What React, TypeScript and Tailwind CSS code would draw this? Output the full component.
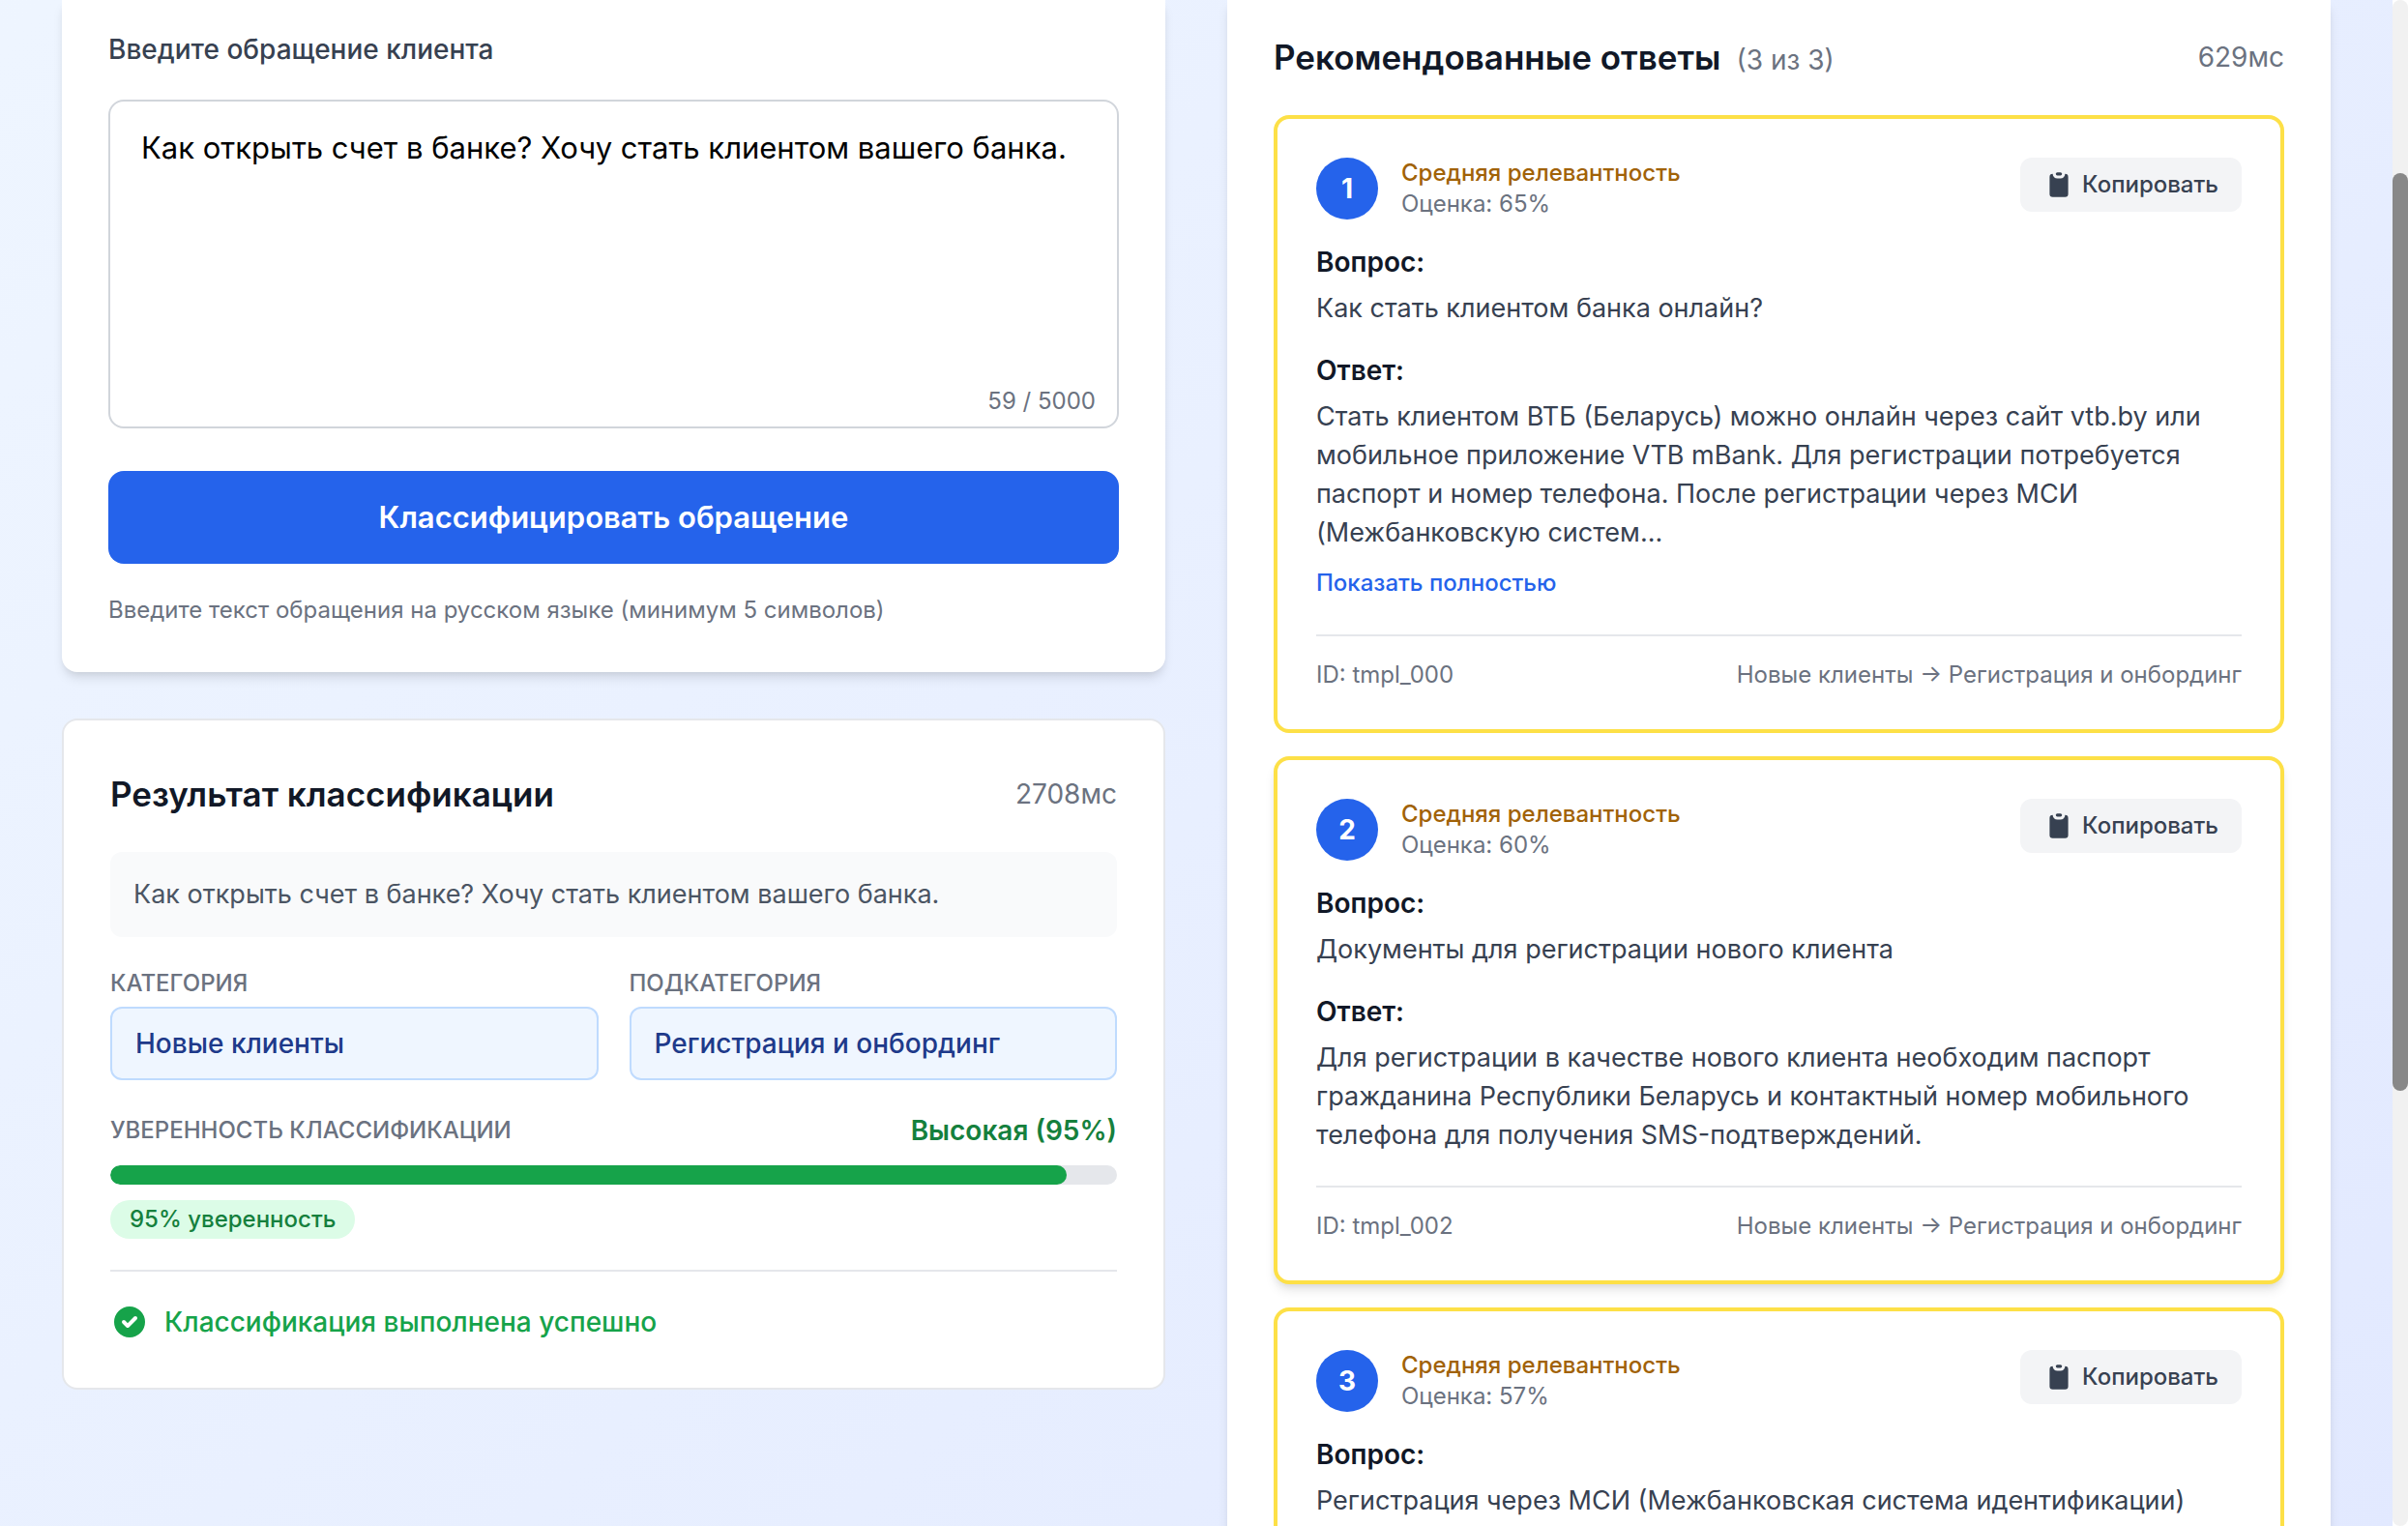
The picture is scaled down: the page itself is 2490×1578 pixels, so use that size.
import { useState } from "react";

const REQUEST = "Как открыть счет в банке? Хочу стать клиентом вашего банка.";
const MAX_LENGTH = 5000;
const CONFIDENCE = 95;

type Answer = {
  rank: number;
  score: number;
  question: string;
  answer?: string;
  truncated?: boolean;
  id?: string;
  raised?: boolean;
};

const ANSWERS: Answer[] = [
  {
    rank: 1,
    score: 65,
    question: "Как стать клиентом банка онлайн?",
    answer:
      "Стать клиентом ВТБ (Беларусь) можно онлайн через сайт vtb.by или мобильное приложение VTB mBank. Для регистрации потребуется паспорт и номер телефона. После регистрации через МСИ (Межбанковскую систем...",
    truncated: true,
    id: "tmpl_000",
  },
  {
    rank: 2,
    score: 60,
    question: "Документы для регистрации нового клиента",
    answer:
      "Для регистрации в качестве нового клиента необходим паспорт гражданина Республики Беларусь и контактный номер мобильного телефона для получения SMS-подтверждений.",
    id: "tmpl_002",
    raised: true,
  },
  {
    rank: 3,
    score: 57,
    question: "Регистрация через МСИ (Межбанковская система идентификации)",
  },
];

const SHADOW =
  "shadow-[0_8px_12px_-2px_rgb(0_0_0/0.1),0_4px_8px_-4px_rgb(0_0_0/0.1)]";

function ClipboardIcon() {
  return (
    <svg className="size-8" viewBox="0 0 20 20" fill="currentColor" aria-hidden="true">
      <path d="M8 3a1 1 0 011-1h2a1 1 0 110 2H9a1 1 0 01-1-1z" />
      <path d="M6 3a2 2 0 00-2 2v11a2 2 0 002 2h8a2 2 0 002-2V5a2 2 0 00-2-2 3 3 0 01-3 3H9a3 3 0 01-3-3z" />
    </svg>
  );
}

function CheckCircleIcon() {
  return (
    <svg className="size-10" viewBox="0 0 20 20" fill="currentColor" aria-hidden="true">
      <path
        fillRule="evenodd"
        clipRule="evenodd"
        d="M10 18a8 8 0 100-16 8 8 0 000 16zm3.707-9.293a1 1 0 00-1.414-1.414L9 10.586 7.707 9.293a1 1 0 00-1.414 1.414l2 2a1 1 0 001.414 0l4-4z"
      />
    </svg>
  );
}

function RequestForm() {
  const [text, setText] = useState(REQUEST);
  return (
    <form
      className={`flex flex-col rounded-b-2xl bg-white px-12 pt-[31px] pb-12 ${SHADOW}`}
      onSubmit={(e) => e.preventDefault()}
    >
      <label htmlFor="request" className="text-[28px] leading-10 font-medium text-[#374151]">
        Введите обращение клиента
      </label>
      <div className="relative mt-8 flex">
        <textarea
          id="request"
          value={text}
          maxLength={MAX_LENGTH}
          onChange={(e) => setText(e.target.value)}
          className="h-[340px] w-full resize-none rounded-2xl border-2 border-[#d1d5db] bg-white px-8 py-6 text-[31px] leading-12 text-black outline-none"
        />
        <span className="absolute right-6 bottom-3 text-[24px] leading-8 text-[#6b7280]">
          {text.length} / {MAX_LENGTH}
        </span>
      </div>
      <button
        type="submit"
        className="mt-11 rounded-2xl bg-[#2563eb] py-6 text-[31px] leading-12 font-semibold text-white"
      >
        Классифицировать обращение
      </button>
      <p className="mt-8 text-[24px] leading-8 text-[#6b7280]">
        Введите текст обращения на русском языке (минимум 5 символов)
      </p>
    </form>
  );
}

function Field({ label, value }: { label: string; value: string }) {
  return (
    <div>
      <dt className="text-[24px] leading-8 font-medium text-[#6b7280] uppercase">{label}</dt>
      <dd className="mt-2 rounded-xl border-2 border-[#bfdbfe] bg-[#eff6ff] px-6 py-4 text-[28px] leading-10 font-medium text-[#1e3a8a]">
        {value}
      </dd>
    </div>
  );
}

function ClassificationResult() {
  return (
    <section className="mt-12 rounded-2xl border-2 border-[#e5e7eb] bg-white p-12">
      <div className="flex items-center justify-between">
        <h2 className="text-[35px] leading-14 font-semibold text-[#111827]">
          Результат классификации
        </h2>
        <span className="text-[28px] leading-10 text-[#6b7280]">2708мс</span>
      </div>
      <p className="mt-8 rounded-xl bg-[#f9fafb] p-6 text-[27px] leading-10 text-[#4b5563]">
        {REQUEST}
      </p>
      <dl className="mt-8 grid grid-cols-2 gap-8">
        <Field label="Категория" value="Новые клиенты" />
        <Field label="Подкатегория" value="Регистрация и онбординг" />
      </dl>
      <div className="mt-8 flex items-center justify-between">
        <span id="confidence" className="text-[24px] leading-8 font-medium text-[#6b7280] uppercase">
          Уверенность классификации
        </span>
        <span className="text-[28px] leading-10 font-semibold text-[#15803d]">
          Высокая ({CONFIDENCE}%)
        </span>
      </div>
      <div
        role="progressbar"
        aria-labelledby="confidence"
        aria-valuenow={CONFIDENCE}
        className="mt-4 h-5 overflow-hidden rounded-full bg-[#e5e7eb]"
      >
        <div className="h-full rounded-full bg-[#16a34a]" style={{ width: `${CONFIDENCE}%` }} />
      </div>
      <div className="mt-4 flex">
        <span className="rounded-full bg-[#dcfce7] px-5 py-1 text-[24px] leading-8 font-medium text-[#15803d]">
          {CONFIDENCE}% уверенность
        </span>
      </div>
      <div className="mt-8 flex items-center gap-4 border-t-2 border-[#e5e7eb] pt-8 text-[#16a34a]">
        <CheckCircleIcon />
        <span className="text-[28px] leading-10 font-medium">Классификация выполнена успешно</span>
      </div>
    </section>
  );
}

function AnswerCard({ item }: { item: Answer }) {
  return (
    <article
      className={`rounded-2xl border-4 border-[#fde047] bg-white p-10 text-[28px] leading-10 ${item.raised ? SHADOW : ""}`}
    >
      <header className="flex items-start justify-between">
        <div className="flex items-center gap-6">
          <span className="flex size-16 items-center justify-center rounded-full bg-[#2563eb] font-bold text-white">
            {item.rank}
          </span>
          <div className="text-[24px] leading-8">
            <p className="font-medium text-[#a16207]">Средняя релевантность</p>
            <p className="text-[#6b7280]">Оценка: {item.score}%</p>
          </div>
        </div>
        <button
          type="button"
          className="flex items-center gap-2 rounded-xl bg-[#f3f4f6] px-6 py-3 text-[24px] leading-8 font-medium text-[#374151]"
        >
          <ClipboardIcon />
          Копировать
        </button>
      </header>
      <h3 className="mt-6 font-semibold text-[#111827]">Вопрос:</h3>
      <p className="mt-2 text-[27px] leading-10 text-[#374151]">{item.question}</p>
      {item.answer && (
        <>
          <h3 className="mt-6 font-semibold text-[#111827]">Ответ:</h3>
          <p className="mt-2 text-[27px] leading-10 text-[#374151]">{item.answer}</p>
          {item.truncated && (
            <button
              type="button"
              className="mt-4 block pb-[5px] text-[24px] leading-8 font-medium text-[#2563eb]"
            >
              Показать полностью
            </button>
          )}
          <footer className="mt-8 flex items-center justify-between border-t-2 border-[#e5e7eb] pt-6 text-[24px] leading-8 text-[#6b7280]">
            <span>ID: {item.id}</span>
            <span>Новые клиенты → Регистрация и онбординг</span>
          </footer>
        </>
      )}
    </article>
  );
}

function Recommendations() {
  return (
    <section className={`bg-white px-12 pt-[31px] pb-12 ${SHADOW}`}>
      <div className="flex items-center justify-between">
        <div className="flex items-baseline gap-4">
          <h2 className="text-[35px] leading-14 font-semibold text-[#111827]">
            Рекомендованные ответы
          </h2>
          <span className="text-[28px] leading-10 text-[#6b7280]">(3 из 3)</span>
        </div>
        <span className="text-[28px] leading-10 text-[#6b7280]">629мс</span>
      </div>
      <div className="mt-8 flex flex-col gap-6">
        {ANSWERS.map((item) => (
          <AnswerCard key={item.rank} item={item} />
        ))}
      </div>
    </section>
  );
}

function ScrollTrack() {
  return (
    <div className="flex w-4 shrink-0 flex-col bg-white" aria-hidden="true">
      <div className="flex h-full flex-col rounded-full bg-[#f1f1f1]">
        <div className="grow-[179]" />
        <div className="grow-[949] rounded-full bg-[#888888]" />
        <div className="grow-[450]" />
      </div>
    </div>
  );
}

export default function App() {
  return (
    <div className="flex h-screen overflow-hidden font-[Inter,'Noto_Sans',sans-serif]">
      <main className="grid flex-1 grid-cols-2 items-start gap-16 bg-[linear-gradient(to_bottom_right,#eff6ff,#e0e7ff)] bg-[length:100%_2624px] bg-[position:0_-298px] px-16">
        <div>
          <RequestForm />
          <ClassificationResult />
        </div>
        <Recommendations />
      </main>
      <ScrollTrack />
    </div>
  );
}
